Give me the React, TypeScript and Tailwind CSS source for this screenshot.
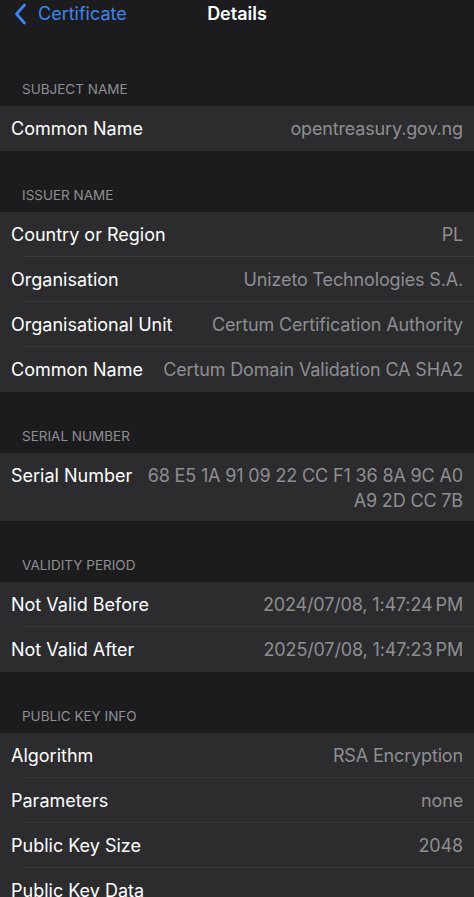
import * as React from 'react'

type Row = { label: string; value: string[] }
type Section = { title: string; rows: Row[] }

const sections: Section[] = [
  { title: 'Subject Name', rows: [{ label: 'Common Name', value: ['opentreasury.gov.ng'] }] },
  {
    title: 'Issuer Name',
    rows: [
      { label: 'Country or Region', value: ['PL'] },
      { label: 'Organisation', value: ['Unizeto Technologies S.A.'] },
      { label: 'Organisational Unit', value: ['Certum Certification Authority'] },
      { label: 'Common Name', value: ['Certum Domain Validation CA SHA2'] },
    ],
  },
  {
    title: 'Serial Number',
    rows: [{ label: 'Serial Number', value: ['68 E5 1A 91 09 22 CC F1 36 8A 9C A0', 'A9 2D CC 7B'] }],
  },
  {
    title: 'Validity Period',
    rows: [
      { label: 'Not Valid Before', value: ['2024/07/08, 1:47:24\u2009PM'] },
      { label: 'Not Valid After', value: ['2025/07/08, 1:47:23\u2009PM'] },
    ],
  },
  {
    title: 'Public Key Info',
    rows: [
      { label: 'Algorithm', value: ['RSA Encryption'] },
      { label: 'Parameters', value: ['none'] },
      { label: 'Public Key Size', value: ['2048'] },
      { label: 'Public Key Data', value: [''] },
    ],
  },
]

function DetailRow({ row, last }: { row: Row; last: boolean }) {
  const multi = row.value.length > 1
  return (
    <div>
      <div
        className={
          multi
            ? 'flex justify-between px-[11px] pt-[10px] pb-[8px] leading-[25px]'
            : 'flex items-center justify-between px-[11px] ' + (last ? 'h-[45px]' : 'h-[44px]')
        }
      >
        <span className="text-white whitespace-nowrap pr-3">{row.label}</span>
        <div className="text-right text-[#8e8e93] tracking-[-0.15px]">
          {row.value.map((v, i) => (
            <div key={i} className="whitespace-nowrap">{v}</div>
          ))}
        </div>
      </div>
      {!last && <div className="ml-[24px] h-px bg-[#3a3a3c]" />}
    </div>
  )
}

export default function App() {
  return (
    <div
      className="w-[474px] h-[897px] overflow-hidden bg-[#1c1c1e] text-[18px]"
      style={{ fontFamily: 'Inter, "Noto Sans", sans-serif' }}
    >
      <div className="relative h-[28px] flex items-center">
        <div className="flex items-center pl-[14px] text-[#3d84f0]">
          <svg width="13" height="22" viewBox="0 0 13 22" fill="none">
            <path d="M10.5 2 L2.5 11 L10.5 20" stroke="currentColor" strokeWidth="2.8" strokeLinecap="round" strokeLinejoin="round" />
          </svg>
          <span className="ml-[11px] text-[18px] leading-none">Certificate</span>
        </div>
        <div className="absolute left-0 right-0 text-center text-white font-semibold text-[18px] leading-none">
          Details
        </div>
      </div>

      {sections.map((s, i) => (
        <div key={s.title}>
          <div className={(i === 0 ? 'h-[78px]' : 'h-[61px]') + ' flex items-end pb-[8px] px-[22px]'}>
            <span className="uppercase text-[13.5px] leading-[18px] text-[#8e8e93]">{s.title}</span>
          </div>
          <div className="bg-[#2c2c2e]">
            {s.rows.map((r, j) => (
              <DetailRow key={r.label} row={r} last={j === s.rows.length - 1} />
            ))}
          </div>
        </div>
      ))}
    </div>
  )
}
